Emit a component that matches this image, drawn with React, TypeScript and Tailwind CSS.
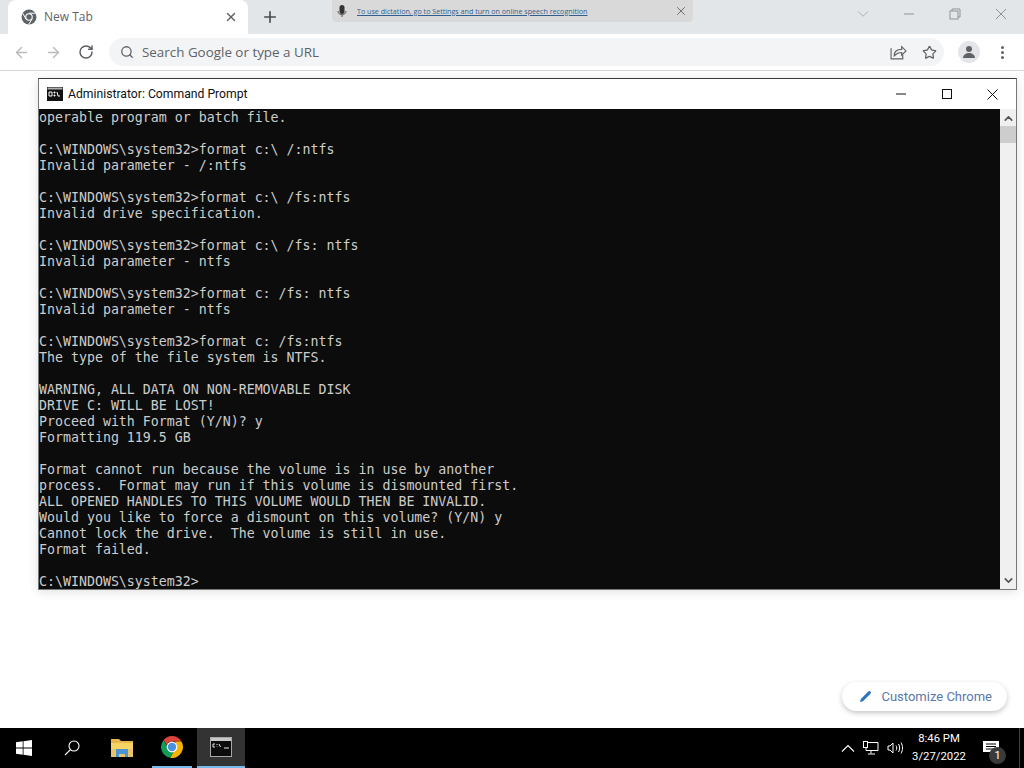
import React from "react";
import { ArrowLeft, ArrowRight, RotateCw, Search, Star, X, Plus, ChevronDown, ChevronUp, Pencil } from "lucide-react";

const consoleLines = [
	"operable program or batch file.",
	"",
	"C:\\WINDOWS\\system32>format c:\\ /:ntfs",
	"Invalid parameter - /:ntfs",
	"",
	"C:\\WINDOWS\\system32>format c:\\ /fs:ntfs",
	"Invalid drive specification.",
	"",
	"C:\\WINDOWS\\system32>format c:\\ /fs: ntfs",
	"Invalid parameter - ntfs",
	"",
	"C:\\WINDOWS\\system32>format c: /fs: ntfs",
	"Invalid parameter - ntfs",
	"",
	"C:\\WINDOWS\\system32>format c: /fs:ntfs",
	"The type of the file system is NTFS.",
	"",
	"WARNING, ALL DATA ON NON-REMOVABLE DISK",
	"DRIVE C: WILL BE LOST!",
	"Proceed with Format (Y/N)? y",
	"Formatting 119.5 GB",
	"",
	"Format cannot run because the volume is in use by another",
	"process.  Format may run if this volume is dismounted first.",
	"ALL OPENED HANDLES TO THIS VOLUME WOULD THEN BE INVALID.",
	"Would you like to force a dismount on this volume? (Y/N) y",
	"Cannot lock the drive.  The volume is still in use.",
	"Format failed.",
	"",
	"C:\\WINDOWS\\system32>",
];

function ChromeGrey() {
	return (
		<svg width="16" height="16" viewBox="0 0 16 16" className="shrink-0">
			<circle cx="8" cy="8" r="7.5" fill="#5f6368" />
			<circle cx="8" cy="8" r="3.8" fill="#ffffff" />
			<circle cx="8" cy="8" r="2.7" fill="#5f6368" />
			<path d="M8 4.2h6.6M5 10l-3.2-5.6M10.9 10.4L7.6 15.4" stroke="#ffffff" strokeWidth="1" fill="none" />
		</svg>
	);
}

function ChromeColor() {
	return (
		<svg width="24" height="24" viewBox="0 0 24 24">
			<path d="M12 1a11 11 0 0 1 9.5 5.5H12a5.5 5.5 0 0 0-5.2 3.7L3.6 4.9A11 11 0 0 1 12 1z" fill="#db4437" />
			<path d="M3.6 4.9l4.8 8.6a5.5 5.5 0 0 0 5 3.8l-3.2 5.5A11 11 0 0 1 3.6 4.9z" fill="#0f9d58" />
			<path d="M21.5 6.5A11 11 0 0 1 10.2 22.8l4.8-8.3A5.5 5.5 0 0 0 15.6 8l-.9-1.5z" fill="#f4b400" />
			<circle cx="12" cy="12" r="5.4" fill="#ffffff" />
			<circle cx="12" cy="12" r="4.2" fill="#4a90e2" />
		</svg>
	);
}

function FolderIcon() {
	return (
		<svg width="22" height="20" viewBox="0 0 22 20">
			<path d="M0 1h8l2 2h12v15H0z" fill="#e8b64c" />
			<path d="M0 5h22v14H0z" fill="#f6d365" />
			<path d="M0 11h22v8H0z" fill="#e9c46a" />
			<path d="M5 11h12v8h-3v-3H8v3H5z" fill="#4b93d1" />
		</svg>
	);
}

function TerminalIcon() {
	return (
		<svg width="22" height="20" viewBox="0 0 22 20">
			<rect x="0.5" y="0.5" width="21" height="19" fill="#0c0c0c" stroke="#a8a8a8" />
			<rect x="1" y="1" width="20" height="3" fill="#c8c8c8" />
			<path d="M3 7h2M3 10h2M3 7v3M7 7v1M7 9.5v.5M9 7l1.500 3M14 11h5" stroke="#e8e8e8" strokeWidth="1" fill="none" />
		</svg>
	);
}

export default function App() {
	return (
		<div className="relative flex flex-col w-[1024px] h-[768px] overflow-hidden bg-white font-['Roboto',sans-serif]">
			<div id="Tab-Strip" className="relative flex items-end h-[34px] shrink-0 pl-2 bg-[#e3e6e8]">
				<div className="flex items-center w-[240px] h-[34px] pl-[13px] pr-[10px] gap-[7px] bg-white rounded-t-lg">
					<ChromeGrey />
					<p className="flex-1 text-[12px] text-[#5f6368] font-['Open_Sans',sans-serif]">New Tab</p>
					<X size={14} strokeWidth={2.4} color="#5f6368" />
				</div>
				<div className="flex items-center justify-center w-[44px] h-[34px]">
					<Plus size={18} strokeWidth={2.2} color="#4a4d51" />
				</div>
				<div className="absolute left-[332px] top-0 flex items-center w-[361px] h-[22px] pl-[4px] pr-[5px] bg-[#d9d9d9] rounded-b-sm">
					<svg width="12" height="14" viewBox="0 0 12 14" className="shrink-0">
						<rect x="3.5" y="1" width="5" height="9" rx="2.500" fill="#333333" />
						<path d="M2 7c0 5 8 5 8 0M6 11v2" stroke="#555555" fill="none" />
					</svg>
					<p className="ml-[9px] flex-1 text-[7.15px] text-[#2f5f8f] underline font-['Open_Sans',sans-serif]">To use dictation, go to Settings and turn on online speech recognition</p>
					<X size={14} strokeWidth={1} color="#222222" />
				</div>
				<div className="absolute right-0 top-0 flex items-center h-[28px] text-[#9b9fa3]">
					<div className="flex justify-center w-[46px]"><ChevronDown size={18} strokeWidth={1} /></div>
					<div className="flex justify-center w-[46px]">
						<svg width="12" height="12" viewBox="0 0 12 12"><path d="M1 6h10" stroke="#8f9396" /></svg>
					</div>
					<div className="flex justify-center w-[46px]">
						<svg width="12" height="12" viewBox="0 0 12 12" fill="none" stroke="#8f9396"><rect x="1" y="3" width="8" height="8" /><path d="M3 3V1h8v8H9" /></svg>
					</div>
					<div className="flex justify-center w-[46px]">
						<svg width="12" height="12" viewBox="0 0 12 12" stroke="#8f9396"><path d="M1 1l10 10M11 1L1 11" /></svg>
					</div>
				</div>
			</div>
			<div id="Toolbar" className="flex items-center h-[37px] shrink-0 pl-[13px] pr-[12px] bg-white border-b border-[#d3d4d5]">
				<ArrowLeft size={17} strokeWidth={2} color="#b8babc" />
				<ArrowRight size={17} strokeWidth={2} color="#b8babc" className="ml-[15px]" />
				<RotateCw size={16} strokeWidth={2.2} color="#5a5d60" className="ml-[16px]" />
				<div className="flex items-center flex-1 h-[28px] ml-[15px] pl-[11px] pr-[7px] rounded-full bg-[#f3f4f5]">
					<Search size={14} strokeWidth={2.2} color="#5f6368" />
					<p className="ml-[8px] flex-1 text-[13.4px] text-[#5f6368] font-['Open_Sans',sans-serif]">Search Google or type a URL</p>
					<svg width="17" height="16" viewBox="0 0 16 15" fill="none" stroke="#5f6368" strokeWidth="1.1" className="mr-[15px]">
						<path d="M1 4v10h11V10" />
						<path d="M4 11c0-4 3-6 7-6V2.500l4 4-4 4V8C8 8 6 9 4 11z" />
					</svg>
					<Star size={15} strokeWidth={2} color="#5f6368" />
				</div>
				<div className="flex items-center justify-center w-[22px] h-[22px] ml-[14px] rounded-full bg-[#e3e5e9]">
					<svg width="14" height="14" viewBox="0 0 14 14" fill="#5f6368"><circle cx="7" cy="4" r="3" /><path d="M1 13c0-3 3-5 6-5s6 2 6 5z" /></svg>
				</div>
				<div className="flex flex-col items-center gap-[2px] w-[20px] ml-[12px]">
					<span className="w-[3px] h-[3px] rounded-full bg-[#5f6368]" />
					<span className="w-[3px] h-[3px] rounded-full bg-[#5f6368]" />
					<span className="w-[3px] h-[3px] rounded-full bg-[#5f6368]" />
				</div>
			</div>
			<div id="Page" className="relative flex flex-1 items-end justify-end pr-[17px] pb-[17px]">
				<button type="button" className="flex items-center h-[29px] gap-[9px] pl-[17px] pr-[15px] rounded-full bg-white shadow-[0_2px_5px_rgba(60,64,67,0.3)]">
					<Pencil size={13} strokeWidth={0} fill="#2f74c0" color="#2f74c0" />
					<span className="text-[13px] text-[#5a78aa]">Customize Chrome</span>
				</button>
				<div id="Console-Window" className="absolute left-[38px] top-[7px] flex flex-col w-[979px] h-[512px] bg-white border border-t-[#3a3a3a] border-x-[#777777] border-b-[#777777] shadow-[0_2px_10px_rgba(0,0,0,0.12)]">
					<div className="flex items-center h-[30px] shrink-0 pl-[8px] bg-white">
						<svg width="16" height="14" viewBox="0 0 16 14" className="shrink-0">
							<rect width="16" height="14" fill="#111111" />
							<rect x="0.5" y="0.5" width="15" height="2" fill="#b0b0b0" />
							<path d="M2 5h3v4H2zM7 5h1v1H7zM7 8h1v1H7zM10 5l1 4h2" stroke="#ffffff" fill="none" />
						</svg>
						<p className="ml-[5px] flex-1 text-[12.2px] text-[#111111]">Administrator: Command Prompt</p>
						<div className="flex items-center justify-center w-[46px]">
							<svg width="10" height="10" viewBox="0 0 10 10"><path d="M0 5h10" stroke="#111111" /></svg>
						</div>
						<div className="flex items-center justify-center w-[46px]">
							<svg width="10" height="10" viewBox="0 0 10 10" fill="none"><rect x="0.5" y="0.5" width="9" height="9" stroke="#111111" /></svg>
						</div>
						<div className="flex items-center justify-center w-[44px] mr-[2px]">
							<svg width="11" height="11" viewBox="0 0 11 11"><path d="M0.500 0.500l10 10M10.500 0.500l-10 10" stroke="#111111" /></svg>
						</div>
					</div>
					<div className="flex flex-1 min-h-0">
						<div className="flex-1 pt-px bg-[#0c0c0c] overflow-hidden">
							{consoleLines.map((line, i) => (
								<p key={i} className="h-4 leading-4 text-[13.28px] text-[#cccccc] whitespace-pre font-['DejaVu_Sans_Mono',monospace]">{line}</p>
							))}
						</div>
						<div className="flex flex-col items-center w-[16px] shrink-0 bg-[#f0f0f0]">
							<ChevronUp size={13} strokeWidth={3} color="#555555" className="mt-[3px]" />
							<div className="w-[16px] h-[17px] mt-[1px] bg-[#cdcdcd]" />
							<div className="flex-1" />
							<ChevronDown size={13} strokeWidth={3} color="#555555" className="mb-[2px]" />
						</div>
					</div>
				</div>
			</div>
			<div id="Taskbar" className="flex items-center h-[40px] shrink-0 bg-black">
				<div className="flex items-center justify-center w-[48px] h-full">
					<svg width="16" height="16" viewBox="0 0 16 16" fill="#ffffff">
						<path d="M0 2.200l6.700-.9v6.300H0zM7.500 1.200L16 0v7.600H7.500zM0 8.400h6.700v6.400L0 13.800zM7.500 8.400H16V16l-8.500-1.200z" />
					</svg>
				</div>
				<div className="flex items-center justify-center w-[48px] h-full">
					<svg width="16" height="16" viewBox="0 0 16 16" fill="none" stroke="#ffffff" strokeWidth="1.100">
						<circle cx="10" cy="6" r="5" />
						<path d="M6.400 9.600L1 15" />
					</svg>
				</div>
				<div className="flex items-center justify-center w-[52px] h-full">
					<FolderIcon />
				</div>
				<div className="flex items-center justify-center w-[40px] h-full border-b-2 border-[#76b9ed] ml-[4px]">
					<ChromeColor />
				</div>
				<div className="flex items-center justify-center w-[48px] h-full ml-[5px] bg-[#333333] border-b-2 border-[#76b9ed]">
					<TerminalIcon />
				</div>
				<div className="flex-1" />
				<div className="flex items-center gap-[8px] text-white">
					<svg width="14" height="8" viewBox="0 0 14 8" fill="none" stroke="#ffffff" strokeWidth="1.100"><path d="M1 7.500l6-6 6 6" /></svg>
					<svg width="16" height="14" viewBox="0 0 16 14" fill="none" stroke="#ffffff"><path d="M3 1.500h12v8H3zM8 9.500v3M5 13h7" /><rect x="0.500" y="0.500" width="4" height="6" fill="#000000" /></svg>
					<svg width="16" height="14" viewBox="0 0 16 14" fill="none" stroke="#ffffff"><path d="M1 5h2l3-3v10l-3-3H1zM9 4.500c1 1.500 1 3.500 0 5M11.500 3c1.500 2.500 1.500 5.500 0 8M14 1.500c2 3.500 2 7.500 0 11" /></svg>
				</div>
				<div className="flex flex-col items-center w-[72px] text-[11.3px] leading-[18px] text-white">
					<p>8:46 PM</p>
					<p>3/27/2022</p>
				</div>
				<div className="relative flex items-center justify-center w-[44px] h-full">
					<svg width="16" height="15" viewBox="0 0 16 15" fill="#ffffff" className="mr-[13px]">
						<path d="M0 0h16v11h-4l-3 3v-3H0z" />
						<path d="M3 3h10M3 5.500h10M3 8h7" stroke="#000000" strokeWidth="1" />
					</svg>
					<span className="absolute left-[14px] top-[19px] flex items-center justify-center w-[17px] h-[17px] rounded-full bg-[#3a3a3a] text-[11px] leading-none text-white">1</span>
				</div>
				<div className="w-[5px] h-full border-l border-[#444444]" />
			</div>
		</div>
	);
}
